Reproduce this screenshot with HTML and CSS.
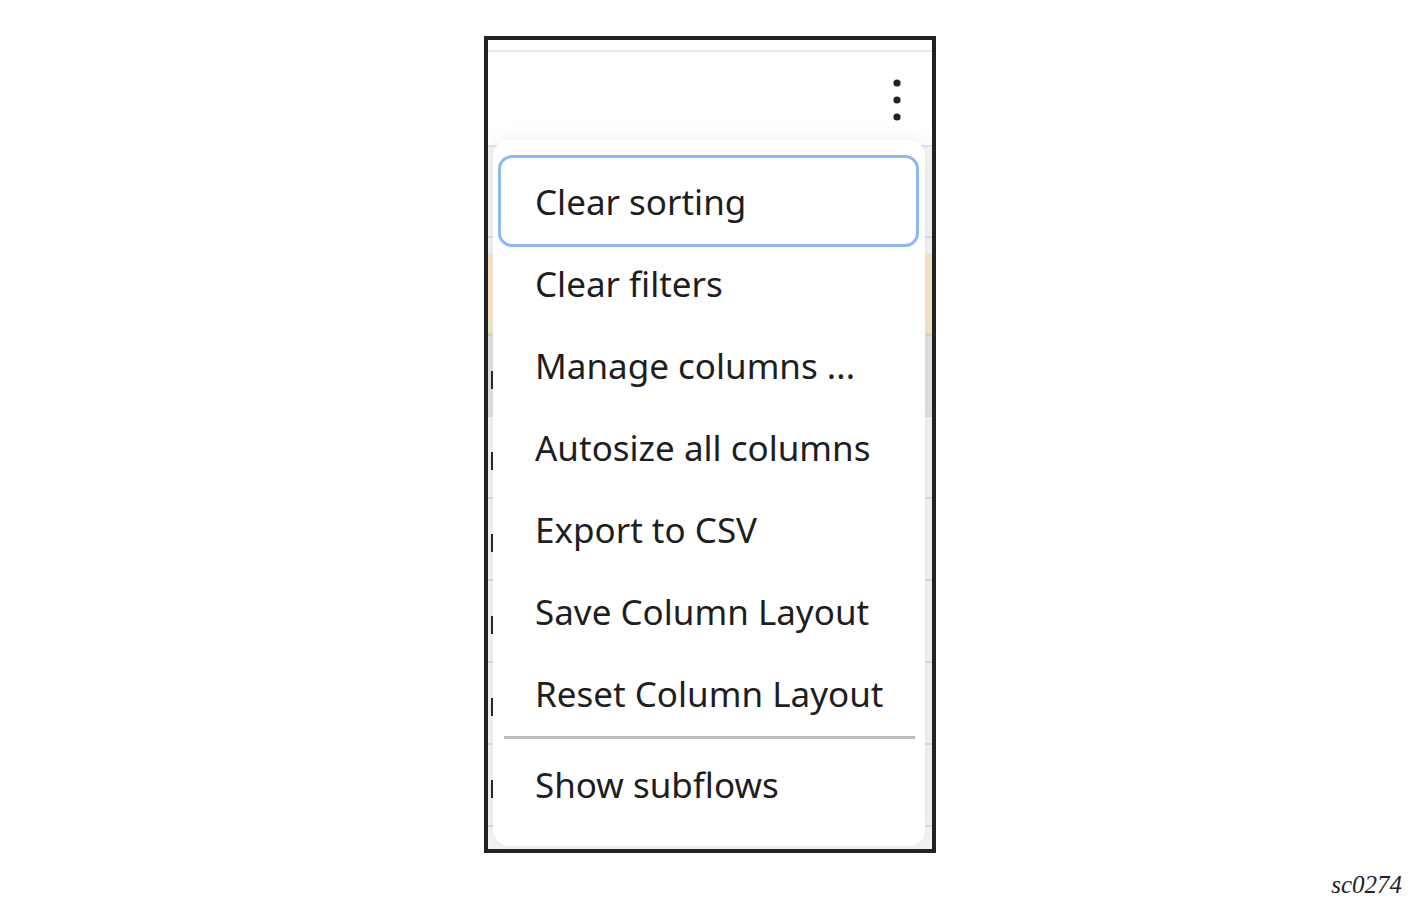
FILE: index.html
```
<!doctype html>
<html>
<head>
    <title>Table actions menu</title>
    <link rel="stylesheet" href="styles.css">
</head>
<body>

<div class="page">
    <div class="shot">
        <div class="grid">
            <div class="head-top"></div>
            <div class="head">
                <a class="kebab" title="More actions">
                    <svg width="8" height="42" viewBox="0 0 8 42">
                        <circle cx="4" cy="4" r="3.6" fill="#222"/>
                        <circle cx="4" cy="21" r="3.6" fill="#222"/>
                        <circle cx="4" cy="38" r="3.6" fill="#222"/>
                    </svg>
                </a>
            </div>
            <div class="row row-a"></div>
            <div class="row row-b"></div>
            <div class="row row-sel"></div>
            <div class="row row-hover"><div class="tick"></div></div>
            <div class="row"><div class="tick"></div></div>
            <div class="row"><div class="tick"></div></div>
            <div class="row"><div class="tick"></div></div>
            <div class="row"><div class="tick"></div></div>
            <div class="row"><div class="tick"></div></div>
            <div class="row row-end"></div>
        </div>

        <div class="menu">
            <div class="item focused">Clear sorting</div>
            <div class="item">Clear filters</div>
            <div class="item">Manage columns ...</div>
            <div class="item">Autosize all columns</div>
            <div class="item">Export to CSV</div>
            <div class="item">Save Column Layout</div>
            <div class="item">Reset Column Layout</div>
            <div class="divider"></div>
            <div class="item">Show subflows</div>
        </div>
    </div>

    <div class="caption">sc0274</div>
</div>

</body>
</html>
```

FILE: styles.css
```
body {
    background: white;
    margin: 0;
    font-family: "Noto Sans", "Open Sans", sans-serif;
}

.page {
    padding-top: 36px;
}

.shot {
    position: relative;
    width: 444px;
    height: 809px;
    margin-left: 484px;
    border: 4px solid #222;
    overflow: hidden;
    background: white;
}

.head-top {
    height: 12px;
    border-bottom: 2px solid #e7e9ee;
    box-sizing: border-box;
}

.head {
    height: 95px;
    display: flex;
    align-items: center;
    justify-content: flex-end;
    padding-right: 31px;
    border-bottom: 2px solid #e4e4e6;
    box-sizing: border-box;
}

.kebab {
    display: block;
    line-height: 0;
    margin-top: 3px;
}

.row {
    height: 82px;
    background: #f4f4f5;
    border-bottom: 2px solid #dcdcdf;
    box-sizing: border-box;
    overflow: hidden;
}
.row-a {
    height: 91px;
}
.row-b {
    height: 15px;
    border-bottom: none;
}
.row-sel {
    height: 83px;
    background: #f7e7c8;
    border-bottom: 3px solid #d9d9d9;
}
.row-hover {
    height: 81px;
    background: #e3e3e3;
}
.row-end {
    height: 40px;
    border-bottom: none;
}

.tick {
    width: 2px;
    height: 18px;
    margin-top: 35px;
    margin-left: 3px;
    background: #2a2a2a;
}

/* popup menu lies over the table */
.menu {
    position: absolute;
    top: 100px;
    left: 5px;
    width: 432px;
    box-sizing: border-box;
    padding: 20px 11px 21px 10px;
    background: #fff;
    border-radius: 16px;
    box-shadow: 0 0 22px rgba(0, 0, 0, 0.07);
}

.item {
    height: 82px;
    display: flex;
    align-items: center;
    padding-left: 32px;
    font-size: 35px;
    color: #1e1e1e;
    white-space: nowrap;
    border-radius: 9px;
}
.item.focused {
    outline: 3px solid #8db7f7;
    outline-offset: 2px;
}

.divider {
    height: 3px;
    margin: 2px -1px 4px 1px;
    background: #bcbcc2;
}

.caption {
    text-align: right;
    padding-right: 21px;
    margin-top: 18px;
    line-height: 28px;
    font-family: "Liberation Serif", serif;
    font-style: italic;
    font-size: 25px;
    color: #222;
}
```
